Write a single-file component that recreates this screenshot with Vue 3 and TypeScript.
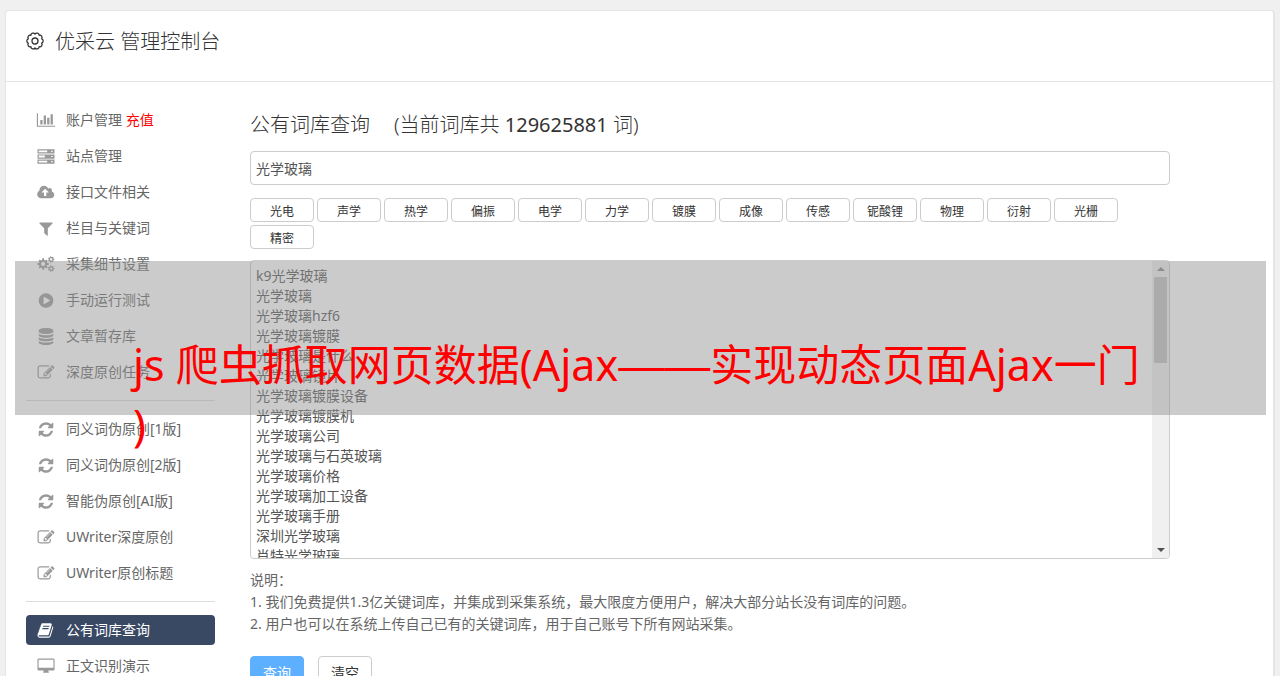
<script setup lang="ts">
import { ref } from 'vue'

interface Icon {
  box: string
  d: string
}

interface MenuItem {
  label: string
  icon: string
  extra?: string
  active?: boolean
}

function gear(cx: number, cy: number, r: number, teeth: number, hole: number): string {
  const points: string[] = []
  const step = (Math.PI * 2) / teeth
  const inner = r * 0.74
  for (let i = 0; i < teeth; i++) {
    const a = i * step
    const corners: [number, number][] = [
      [inner, a - step * 0.3],
      [r, a - step * 0.2],
      [r, a + step * 0.2],
      [inner, a + step * 0.3],
    ]
    for (const [radius, angle] of corners) {
      points.push(`${(cx + radius * Math.cos(angle)).toFixed(1)} ${(cy + radius * Math.sin(angle)).toFixed(1)}`)
    }
  }
  return `M${points.join('L')}zM${cx - hole} ${cy}a${hole} ${hole} 0 1 0 ${hole * 2} 0a${hole} ${hole} 0 1 0 ${-hole * 2} 0z`
}

function scallop(cx: number, cy: number, r: number, lobes: number): string {
  const step = (Math.PI * 2) / lobes
  const bulge = (r * Math.sin(step / 2) * 1.06).toFixed(2)
  const at = (i: number) => {
    const a = (i - 0.5) * step
    return `${(cx + r * Math.cos(a)).toFixed(2)} ${(cy + r * Math.sin(a)).toFixed(2)}`
  }
  let d = `M${at(0)}`
  for (let i = 1; i <= lobes; i++) {
    d += `A${bulge} ${bulge} 0 0 1 ${at(i)}`
  }
  return d + 'z'
}

function disc(top: number): string {
  return `M896 ${top}q237 0 443-43t325-127v170q0 69-103 128t-280 93.5-385 34.5-385-34.5-280-93.5-103-128v-170q119 84 325 127t443 43z`
}

const headGear = scallop(10, 10, 7, 10)

const icons: Record<string, Icon> = {
  chart: {
    box: '0 0 2048 1792',
    d: 'M640 896v512h-256v-512h256zm384-512v1024h-256v-1024h256zm1024 1152v128h-2048v-1536h128v1408h1920zm-640-896v768h-256v-768h256zm384-384v1152h-256v-1152h256z',
  },
  server: {
    box: '0 0 1792 1792',
    d: 'M0 128h1792v448h-1792zM128 256v192h896v-192zM1440 288v128h160v-128zM0 672h1792v448h-1792zM128 800v192h640v-192zM1440 832v128h160v-128zM0 1216h1792v448h-1792zM128 1344v192h896v-192zM1440 1376v128h160v-128z',
  },
  cloud: {
    box: '0 0 1856 1792',
    d: 'M1216 928q0-14-9-23l-352-352q-9-9-23-9t-23 9l-351 351q-10 12-10 24 0 14 9 23t23 9h224v352q0 13 9.5 22.5t22.5 9.5h192q13 0 22.5-9.5t9.5-22.5v-352h224q13 0 22.5-9.5t9.5-22.5zm640 288q0 159-112.5 271.5t-271.5 112.5h-1088q-185 0-316.5-131.5t-131.5-316.5q0-130 70-240t188-165q-2-30-2-43 0-212 150-362t362-150q156 0 285.5 87t188.5 231q71-62 166-62 106 0 181 75t75 181q0 76-41 138 130 31 213.5 135.5t83.5 238.5z',
  },
  filter: {
    box: '0 0 1792 1792',
    d: 'M1595 295q17 41-14 70l-493 493v742q0 42-39 59-13 5-25 5-27 0-45-19l-256-256q-19-19-19-45v-486l-493-493q-31-29-14-70 17-39 59-39h1280q42 0 59 39z',
  },
  cogs: {
    box: '0 0 1920 1792',
    d: gear(640, 896, 640, 8, 240) + gear(1540, 384, 370, 7, 130) + gear(1540, 1408, 370, 7, 130),
  },
  play: {
    box: '0 0 1792 1792',
    d: 'M896 128q209 0 385.5 103t279.5 279.5 103 385.5-103 385.5-279.5 279.5-385.5 103-385.5-103-279.5-279.5-103-385.5 103-385.5 279.5-279.5 385.5-103zm384 823q32-18 32-55t-32-55l-544-320q-31-19-64-1-32 19-32 56v640q0 37 32 56 16 8 32 8 17 0 32-9z',
  },
  database: {
    box: '0 0 1792 1792',
    d: disc(768) + disc(1152) + disc(1536) + 'M896 0q208 0 385 34.5t280 93.5 103 128v128q0 69-103 128t-280 93.5-385 34.5-385-34.5-280-93.5-103-128v-128q0-69 103-128t280-93.5 385-34.5z',
  },
  edit: {
    box: '0 0 1792 1792',
    d: 'M888 1184l116-116-152-152-116 116v56h96v96h56zm440-720q-16-16-33 1l-350 350q-17 17-1 33t33-1l350-350q17-17 1-33zm80 594v190q0 119-84.5 203.5t-203.5 84.5h-832q-119 0-203.5-84.5t-84.5-203.5v-832q0-119 84.5-203.5t203.5-84.5h832q63 0 117 25 15 7 18 23 3 17-9 29l-49 49q-14 14-32 8-23-6-45-6h-832q-66 0-113 47t-47 113v832q0 66 47 113t113 47h832q66 0 113-47t47-113v-126q0-13 9-22l64-64q15-15 35-7t20 29zm-96-738l288 288-672 672h-288v-288zm444 132l-92 92-288-288 92-92q28-28 68-28t68 28l152 152q28 28 28 68t-28 68z',
  },
  refresh: {
    box: '0 0 1792 1792',
    d: 'M1639 1056q0 5-1 7-64 268-268 434.5t-478 166.5q-146 0-282.5-55t-243.5-157l-129 129q-19 19-45 19t-45-19-19-45v-448q0-26 19-45t45-19h448q26 0 45 19t19 45-19 45l-137 137q71 66 161 102t187 36q134 0 250-65t186-179q11-17 53-117 8-23 30-23h192q13 0 22.5 9.5t9.5 22.5zm25-800v448q0 26-19 45t-45 19h-448q-26 0-45-19t-19-45 19-45l138-138q-148-137-349-137-134 0-250 65t-186 179q-11 17-53 117-8 23-30 23h-199q-13 0-22.5-9.5t-9.5-22.5v-7q65-268 270-434.5t480-166.5q146 0 284 55.5t245 156.5l130-129q19-19 45-19t45 19 19 45z',
  },
  book: {
    box: '0 0 1792 1792',
    d: 'M1639 478q40 57 18 129l-275 906q-19 64-76.5 107.5t-122.5 43.5h-923q-77 0-148.5-53.5t-99.5-131.5q-24-67-2-127 0-4 3-27t4-37q1-8-3-21.5t-3-19.5q2-11 8-21t16.5-23.5 16.5-23.5q23-38 45-91.5t30-91.5q3-10 .5-30t-.5-28q3-11 17-28t17-23q21-36 42-92t25-90q1-9-2.5-32t.5-28q4-13 22-30.5t22-22.5q19-26 42.5-84.5t27.5-96.5q1-8-3-25.5t-2-26.5q2-8 9-18t18-23 17-21q8-12 16.5-30.5t15-35 16-36 19.5-32 26.5-23.5 36-11.5 47.5 5.5l-1 3q38-9 51-9h761q74 0 114 56t18 130l-274 906q-36 119-71.5 153.5t-128.5 34.5h-869q-27 0-38 15-11 16-1 43 24 70 144 70h923q29 0 56-15.5t35-41.5l300-987q7-22 5-57 38 15 59 43zm-1064 2q-4 13 2 22.5t20 9.5h608q13 0 25.5-9.5t16.5-22.5l21-64q4-13-2-22.5t-20-9.5h-608q-13 0-25.5 9.5t-16.5 22.5zm-83 256q-4 13 2 22.5t20 9.5h608q13 0 25.5-9.5t16.5-22.5l21-64q4-13-2-22.5t-20-9.5h-608q-13 0-25.5 9.5t-16.5 22.5z',
  },
  desktop: {
    box: '0 0 1920 1792',
    d: 'M160 64h1600q160 0 160 160v1024q0 160-160 160h-544q0 90 64 180v76h-640v-76q64-90 64-180h-544q-160 0-160-160v-1024q0-160 160-160zM128 192v896h1664v-896z',
  },
}

const groups: MenuItem[][] = [
  [
    { label: '账户管理', icon: 'chart', extra: '充值' },
    { label: '站点管理', icon: 'server' },
    { label: '接口文件相关', icon: 'cloud' },
    { label: '栏目与关键词', icon: 'filter' },
    { label: '采集细节设置', icon: 'cogs' },
    { label: '手动运行测试', icon: 'play' },
    { label: '文章暂存库', icon: 'database' },
    { label: '深度原创任务', icon: 'edit' },
  ],
  [
    { label: '同义词伪原创[1版]', icon: 'refresh' },
    { label: '同义词伪原创[2版]', icon: 'refresh' },
    { label: '智能伪原创[AI版]', icon: 'refresh' },
    { label: 'UWriter深度原创', icon: 'edit' },
    { label: 'UWriter原创标题', icon: 'edit' },
  ],
  [
    { label: '公有词库查询', icon: 'book', active: true },
    { label: '正文识别演示', icon: 'desktop' },
  ],
]

const tags = ['光电', '声学', '热学', '偏振', '电学', '力学', '镀膜', '成像', '传感', '铌酸锂', '物理', '衍射', '光栅', '精密']

const keyword = ref('光学玻璃')
const results = ref(
  [
    'k9光学玻璃',
    '光学玻璃',
    '光学玻璃hzf6',
    '光学玻璃镀膜',
    '光学玻璃是什么',
    '光学玻璃镜片',
    '光学玻璃镀膜设备',
    '光学玻璃镀膜机',
    '光学玻璃公司',
    '光学玻璃与石英玻璃',
    '光学玻璃价格',
    '光学玻璃加工设备',
    '光学玻璃手册',
    '深圳光学玻璃',
    '肖特光学玻璃',
  ].join('\n'),
)

function clear() {
  keyword.value = ''
  results.value = ''
}
</script>

<template>
  <div class="page">
    <div class="panel">
      <header class="panel-head">
        <svg class="head-icon" viewBox="0 0 20 20" aria-hidden="true">
          <path :d="headGear" />
          <circle cx="10" cy="10" r="3" />
        </svg>
        <h1>优采云 管理控制台</h1>
      </header>
      <div class="panel-body">
        <nav class="sidebar">
          <ul v-for="(group, g) in groups" :key="g">
            <li v-for="item in group" :key="item.label">
              <a href="#" :class="{ active: item.active }">
                <svg :viewBox="icons[item.icon].box" :class="['icon', item.icon]" aria-hidden="true">
                  <path fill-rule="evenodd" :d="icons[item.icon].d" />
                </svg>
                <span>{{ item.label }} <em v-if="item.extra">{{ item.extra }}</em></span>
              </a>
            </li>
          </ul>
        </nav>
        <main class="content">
          <h2><span>公有词库查询</span><span>(当前词库共 <b>129625881</b> 词)</span></h2>
          <input v-model="keyword" class="field" type="text" aria-label="关键词" />
          <div class="tags">
            <button v-for="tag in tags" :key="tag" type="button" @click="keyword = tag">{{ tag }}</button>
          </div>
          <div class="result">
            <textarea v-model="results" class="field" aria-label="查询结果" wrap="off"></textarea>
            <div class="scroll" aria-hidden="true">
              <svg class="up" viewBox="0 0 8 4"><path d="M0 4L4 0L8 4z" /></svg>
              <div class="thumb"></div>
              <svg class="down" viewBox="0 0 8 4"><path d="M0 0H8L4 4z" /></svg>
            </div>
          </div>
          <div class="notes">
            <p>说明：</p>
            <p>1. 我们免费提供1.3亿关键词库，并集成到采集系统，最大限度方便用户，解决大部分站长没有词库的问题。</p>
            <p>2. 用户也可以在系统上传自己已有的关键词库，用于自己账号下所有网站采集。</p>
          </div>
          <div class="actions">
            <button type="button" class="primary">查询</button>
            <button type="button" @click="clear">清空</button>
          </div>
        </main>
      </div>
    </div>
    <div class="banner">
      <p>js 爬虫抓取网页数据(Ajax<span class="dash">——</span>实现动态页面Ajax一门<br />)</p>
    </div>
  </div>
</template>

<style>
html {
  scrollbar-width: none;
}
body {
  margin: 0;
  background: #f0f0f0;
}
</style>

<style scoped>
.page {
  position: relative;
  padding: 10px 5px 20px;
  color: #333;
  font: 400 14px/20px "Noto Sans", "Noto Sans CJK SC", sans-serif;
}
.page * {
  box-sizing: border-box;
}
.panel {
  background: #fff;
  border: 1px solid #e5e5e5;
  border-right-width: 2px;
  border-radius: 4px;
}
.panel-head {
  display: flex;
  align-items: center;
  gap: 10px;
  height: 71px;
  padding: 0 19px 8px;
  border-bottom: 1px solid #e5e5e5;
}
.head-icon {
  width: 20px;
  height: 20px;
  margin-bottom: 2px;
  fill: none;
  stroke: #333;
  stroke-width: 1.3;
  stroke-linejoin: round;
}
h1,
h2 {
  margin: 0;
  font-size: 20px;
  line-height: 28px;
  font-weight: 300;
}
h2 b {
  font-weight: 400;
}
.panel-body {
  display: flex;
  gap: 35px;
  padding: 23px 103px 20px 20px;
}
.sidebar {
  flex: 0 0 189px;
}
ul {
  display: flex;
  flex-direction: column;
  gap: 6px;
  margin: 0;
  padding: 0;
  list-style: none;
}
ul + ul {
  margin-top: 13px;
  padding-top: 13px;
  border-top: 1px solid #ddd;
}
.sidebar a {
  display: flex;
  align-items: center;
  gap: 10px;
  height: 30px;
  padding: 0 10px;
  border-radius: 4px;
  color: #666;
  text-decoration: none;
}
.sidebar em {
  color: #f00;
  font-style: normal;
}
.sidebar a.active {
  background: #394963;
  color: #fff;
}
.icon {
  width: 20px;
  height: 17px;
  fill: #999;
}
.active .icon {
  fill: #fff;
}
.icon.chart,
.icon.cloud,
.icon.cogs,
.icon.desktop {
  height: 16px;
}
.content {
  flex: 1;
  min-width: 0;
  padding-top: 6px;
}
h2 {
  display: flex;
  gap: 24px;
  margin-bottom: 12px;
}
.field {
  display: block;
  width: 100%;
  padding: 5px;
  border: 1px solid #ccc;
  border-radius: 4px;
  background: #fff;
  color: #555;
  font: inherit;
  outline: none;
}
input.field {
  height: 34px;
}
.tags {
  display: flex;
  flex-wrap: wrap;
  gap: 3px;
  margin: 13px 0 11px;
}
button {
  padding: 0;
  border: 1px solid #ccc;
  border-radius: 4px;
  background: #fff;
  color: #333;
  font: inherit;
}
.tags button {
  width: 64px;
  height: 24px;
  padding-top: 3px;
  font-size: 12px;
  line-height: 18px;
}
.result {
  position: relative;
}
textarea.field {
  height: 299px;
  resize: none;
  overflow: hidden;
}
.scroll {
  position: absolute;
  top: 1px;
  right: 1px;
  bottom: 1px;
  display: flex;
  flex-direction: column;
  align-items: center;
  width: 17px;
  padding: 6px 0;
  background: #f0f0f0;
  border-radius: 0 3px 3px 0;
}
.scroll svg {
  width: 8px;
  height: 4px;
  fill: #505050;
}
.scroll .up {
  fill: #888;
}
.thumb {
  width: 13px;
  height: 86px;
  margin: 6px 0 auto;
  background: #c1c1c1;
}
.notes {
  margin-top: 10px;
  color: #666;
  line-height: 22px;
}
.notes p {
  margin: 0;
}
.actions {
  display: flex;
  gap: 14px;
  margin-top: 21px;
}
.actions button {
  width: 54px;
  height: 34px;
}
.actions .primary {
  border-color: #5cb0ff;
  background: #5cb0ff;
  color: #fff;
}
.banner {
  position: absolute;
  top: 261px;
  left: 15px;
  right: 14px;
  height: 154px;
  padding: 74px 0 0 118px;
  background: rgba(147, 147, 147, 0.48);
  color: #f00;
  font-size: 43px;
  line-height: 60px;
  white-space: nowrap;
  pointer-events: none;
}
.banner p {
  margin: 0;
}
.dash {
  font-family: "Liberation Sans", sans-serif;
  font-size: 46px;
  line-height: 1;
}
</style>
